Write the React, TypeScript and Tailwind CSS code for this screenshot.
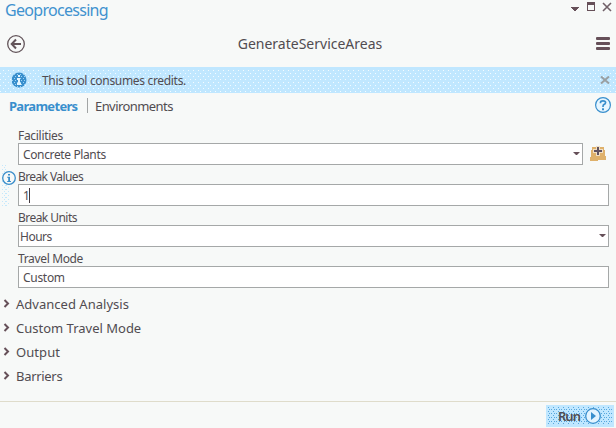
import React from "react";

const FONT = "font-['Noto_Sans','Open_Sans',sans-serif]";

function Caret() {
  return (
    <svg width="7" height="4" viewBox="0 0 7 4" className="shrink-0">
      <path d="M0 0H7L4 3H3Z" fill="#665059" />
    </svg>
  );
}

function BannerDots() {
  return (
    <svg className="absolute inset-0 h-full w-full" aria-hidden="true">
      <defs>
        <pattern id="dots" width="5" height="6" patternUnits="userSpaceOnUse">
          <path d="M3 3h1v1h-1zM0 0h1v1h-1z" fill="#f4fbff" />
        </pattern>
      </defs>
      <rect y="2" width="100%" height="23" fill="url(#dots)" />
    </svg>
  );
}

type FieldProps = {
  label: string;
  value: string;
  labelTracking: string;
  valueTracking: string;
  pad?: string;
  dropdown?: boolean;
  cursor?: boolean;
  note?: boolean;
  addButton?: boolean;
};

function Field({ label, value, labelTracking, valueTracking, pad = "pl-1", dropdown, cursor, note, addButton }: FieldProps) {
  return (
    <div className="relative">
      {note && (
        <svg className="absolute -left-4 top-0 h-[42px] w-[15px]" viewBox="0 0 15 42">
          <defs>
            <pattern id="strip" width="4" height="4" patternUnits="userSpaceOnUse">
              <path d="M0 0h1v1h-1zM2 2h1v1h-1zM3 0h1v1h-1z" fill="#c4e8fc" />
            </pattern>
          </defs>
          <path d="M0 0H4V7H7V41H0Z" fill="url(#strip)" />
          <circle cx="7" cy="13" r="6.3" fill="#f7f9f8" stroke="#398dca" strokeWidth="1.3" />
          <path d="M6 9h2v1.6H6zM5.2 11.8H8v4.2h1v1H5.2v-1h1v-3.2h-1z" fill="#398dca" />
        </svg>
      )}
      <div className={`h-[19px] whitespace-nowrap text-[12px] leading-[23px] ${labelTracking}`}>{label}</div>
      <div className="flex items-center">
        <div className={`flex h-[22px] flex-1 items-center justify-between border border-[#a5a8a8] bg-white pr-[2px] ${pad}`}>
          <div className="flex items-center">
            <span className={`whitespace-nowrap pt-[2px] text-[12px] leading-[18px] ${valueTracking}`}>{value}</span>
            {cursor && <span className="-ml-px h-[15px] w-px bg-[#443b40]" />}
          </div>
          {dropdown && <Caret />}
        </div>
        {addButton && (
          <svg width="26" height="20" viewBox="0 0 26 20" className="shrink-0" shapeRendering="crispEdges">
            <path d="M9 3h12v3h1v6h1v4h-8v1H7v-4h1V6h1z" fill="#dfb16b" />
            <path d="M13 2h4v3h3v4h-3v3h-4v-3h-3V5h3z" fill="#f0dfc5" />
            <path d="M14 3h2v3h3v2h-3v3h-2V8h-3V6h3z" fill="#605260" />
          </svg>
        )}
      </div>
    </div>
  );
}

function Section({ label, tracking }: { label: string; tracking: string }) {
  return (
    <div className="flex h-6 items-center">
      <svg width="12" height="10" viewBox="0 0 12 10" className="mr-1 shrink-0">
        <path d="M4.5 1L8 4.5L4.5 8" fill="none" stroke="#665059" strokeWidth="2" />
      </svg>
      <span className={`whitespace-nowrap text-[13px] leading-6 ${tracking}`}>{label}</span>
    </div>
  );
}

export default function App() {
  return (
    <div className={`flex h-[428px] w-[616px] flex-col overflow-hidden bg-[#f7f9f8] text-[#514c51] ${FONT}`}>
      <div className="flex h-5 items-start justify-between pl-[5px] pr-1">
        <h1 className="whitespace-nowrap text-[16px] leading-[20px] tracking-[-0.7px] text-[#3f92cf]">Geoprocessing</h1>
        <svg width="41" height="14" viewBox="0 0 41 14" shapeRendering="crispEdges">
          <path d="M0 7h8v1H7v1H6v1H5v1H3v-1H2V9H1V8H0z" fill="#665059" />
          <path d="M16 2h8v9h-8zM17 5v5h6V5z" fill="#665059" fillRule="evenodd" />
          <path d="M32 3L40 11M40 3L32 11" stroke="#706068" strokeWidth="1.6" shapeRendering="auto" />
        </svg>
      </div>

      <div className="flex h-[47px] items-center justify-between pl-[7px] pr-[6px]">
        <svg width="18" height="18" viewBox="0 0 18 18" fill="none" stroke="#625459">
          <circle cx="9" cy="9" r="8.3" strokeWidth="1.3" />
          <path d="M14 9H5M9 4.5L4.7 9L9 13.5" strokeWidth="2" />
        </svg>
        <h2 className="whitespace-nowrap pr-px text-[14px] tracking-[0px]">GenerateServiceAreas</h2>
        <svg width="14" height="14" viewBox="0 0 14 14" fill="#665059">
          <rect width="14" height="3" rx="1" />
          <rect y="5" width="14" height="3" rx="1" />
          <rect y="10" width="14" height="3" rx="1" />
        </svg>
      </div>

      <div className="relative flex h-[26px] items-center bg-[#c0e7ff] pl-3 pr-[6px]">
        <BannerDots />
        <svg width="15" height="16" viewBox="0 0 15 16" className="relative">
          <defs>
            <pattern id="infoDots" width="3" height="4" patternUnits="userSpaceOnUse">
              <path d="M0 0h1v1h-1zM2 2h1v1h-1z" fill="#9ed3f4" />
            </pattern>
          </defs>
          <circle cx="7" cy="8" r="7.5" fill="#398fcd" />
          <circle cx="7" cy="8" r="7.5" fill="url(#infoDots)" />
          <path d="M6 3h2v2H6zM5 6h3v5h1v2H5v-2h1V8H5z" fill="#e4f5ff" />
        </svg>
        <span className="relative ml-[15px] whitespace-nowrap pt-px text-[12px] tracking-[-0.32px]">This tool consumes credits.</span>
        <svg width="10" height="8" viewBox="0 0 10 8" className="relative ml-auto">
          <path d="M1 0.5L9 7.5M9 0.5L1 7.5" stroke="#999fa2" strokeWidth="2" />
        </svg>
      </div>

      <div className="flex h-[31px] shrink-0 items-start pl-[9px] pr-[5px]">
        <span className="w-[70px] whitespace-nowrap text-[13px] font-bold leading-[26px] tracking-[-0.7px] text-[#398fcd]">Parameters</span>
        <span className="ml-2 mt-[5px] h-[15px] w-px bg-[#a2a5a5]" />
        <span className="ml-[7px] whitespace-nowrap text-[13px] leading-[26px] tracking-[-0.57px]">Environments</span>
        <svg width="16" height="16" viewBox="0 0 16 16" className="ml-auto mt-1">
          <circle cx="8" cy="8" r="7.4" fill="#e7f6ff" stroke="#398fcd" strokeWidth="1.2" />
          <path d="M5.5 6.2V5.4Q5.5 3.8 8 3.8Q10.6 3.8 10.6 5.6Q10.6 7 8.8 7.6Q8 8 8 10" fill="none" stroke="#398fcd" strokeWidth="1.7" />
          <path d="M7 11.3h2v2H7z" fill="#398fcd" />
        </svg>
      </div>

      <div className="flex flex-col pl-[18px] pr-[7px]">
        <Field label="Facilities" value="Concrete Plants" labelTracking="tracking-[-0.3px]" valueTracking="tracking-[-0.37px]" dropdown addButton />
        <Field label="Break Values" value="1" labelTracking="tracking-[-0.6px]" valueTracking="tracking-[-0.1px]" cursor note />
        <Field label="Break Units" value="Hours" labelTracking="tracking-[-0.55px]" valueTracking="tracking-[-0.5px]" pad="pl-px" dropdown />
        <Field label="Travel Mode" value="Custom" labelTracking="tracking-[-0.35px]" valueTracking="tracking-[-0.3px]" />
      </div>

      <div className="mt-1 flex flex-col">
        <Section label="Advanced Analysis" tracking="tracking-[0.02px]" />
        <Section label="Custom Travel Mode" tracking="tracking-[0px]" />
        <Section label="Output" tracking="tracking-[0.08px]" />
        <Section label="Barriers" tracking="tracking-[-0.3px]" />
      </div>

      <div className="mt-auto flex h-[27px] justify-end border-t border-[#dfdccb] pr-[2px] pt-[3px]">
        <button className="relative flex h-[22px] w-[68px] items-center bg-[#c0e7ff] pl-3">
          <svg className="absolute inset-0 h-full w-full" aria-hidden="true">
            <defs>
              <pattern id="runDots" width="5" height="4" patternUnits="userSpaceOnUse">
                <path d="M0 0h1v1h-1zM2 2h1v1h-1zM3 0h1v1h-1z" fill="#58a8dd" />
              </pattern>
            </defs>
            <rect x="1" y="1" width="66" height="19" fill="url(#runDots)" />
          </svg>
          <span className="relative text-[13px] font-semibold leading-5 tracking-[-1px]">Run</span>
          <svg width="16" height="16" viewBox="0 0 16 16" className="absolute left-[39px] top-[3px]">
            <circle cx="8" cy="8" r="7.3" fill="#e3f4ff" stroke="#398fcd" strokeWidth="1.3" />
            <path d="M6 4L11 8L6 12Z" fill="#398fcd" />
          </svg>
        </button>
      </div>
    </div>
  );
}
